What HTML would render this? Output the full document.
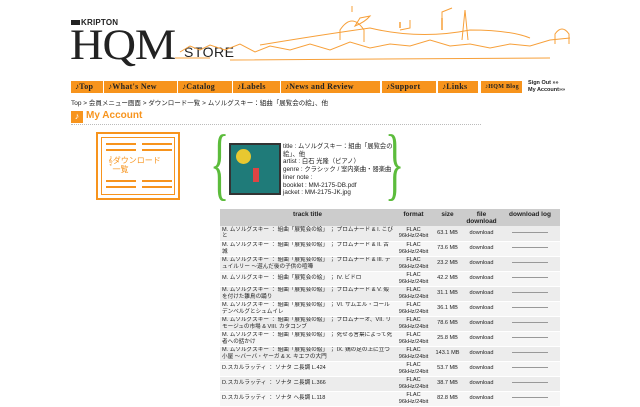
<!DOCTYPE html>
<html><head><meta charset="utf-8"><style>
*{margin:0;padding:0;box-sizing:border-box}
body{width:640px;height:402px;overflow:hidden;background:#fff;font-family:"Liberation Sans","Noto Sans CJK JP",sans-serif;color:#222;position:relative}
.a{position:absolute}
.nav{position:absolute;top:81px;height:12px;background:#f7941d;color:#222;font-size:8px;font-weight:bold;line-height:12px;padding-left:4px;font-family:"Liberation Serif",serif;letter-spacing:.3px}
table{border-collapse:collapse;font-size:5.6px;line-height:6.5px;position:absolute;left:220px;top:209px;width:340px;table-layout:fixed}
td,th{padding:0 2px;vertical-align:middle;overflow:hidden}
th{background:#ccc;height:17px;font-size:6.5px;line-height:7px;vertical-align:top;padding-top:2px}
tr.r td{height:15px;border-bottom:1px solid #fff}
tr.r:nth-child(even) td{background:#ececec}
tr.r:nth-child(odd) td{background:#f6f6f6}
.c{text-align:center}
.ln{display:inline-block;width:36px;border-top:1px solid #999;vertical-align:middle}
.hl{position:absolute;height:2px;background:#f7941d}
</style></head><body>
<div class="a" style="left:71px;top:18px;font-size:8px;font-weight:bold;letter-spacing:.2px"><span style="display:inline-block;width:9px;height:5px;background:#222;margin-right:1px"></span>KRIPTON</div>
<div class="a" style="left:70px;top:24px;font-family:'Liberation Serif',serif;font-size:43px;line-height:43px;letter-spacing:-1px;transform:scaleX(1.08);transform-origin:left">HQM</div>
<div class="a" style="left:184px;top:44px;font-size:14px;letter-spacing:.5px">STORE</div>
<svg class="a" style="left:170px;top:0" width="420" height="70" fill="none" stroke="#f7a03a" stroke-width="1">
<path d="M10 52 L20 46 L30 50 L40 45 L55 50 L70 44 L85 52 L100 46 L120 50 L140 44 L160 50 L180 42 L200 48 L220 44 L240 46 L260 40 L280 46 L300 44 L320 48 L340 44 L360 46 L380 40 L400 38"/>
<path d="M5 58 L40 58 M60 60 L380 58"/>
<path d="M170 40 L170 30 Q182 12 194 30 L194 42 M182 12 L182 6"/>
<path d="M90 45 Q150 35 200 28 Q250 40 300 30 Q340 30 360 38"/>
<path d="M292 40 L295 10 L298 40"/>
<path d="M385 44 L385 34 Q392 24 399 34 L399 44"/>
<path d="M185 26 Q195 22 200 16 L190 18 Z"/>
<path d="M230 30 L240 28 L240 20 M272 30 L272 12 L282 8"/>
<g stroke-width="1.5"><path d="M230 28 L230 22 M272 30 L272 18"/></g>
</svg>
<div class="nav" style="left:71px;width:32px">♪Top</div>
<div class="nav" style="left:104px;width:73px">♪What's New</div>
<div class="nav" style="left:178px;width:54px">♪Catalog</div>
<div class="nav" style="left:233px;width:47px">♪Labels</div>
<div class="nav" style="left:281px;width:99px">♪News and Review</div>
<div class="nav" style="left:382px;width:54px">♪Support</div>
<div class="nav" style="left:438px;width:40px">♪Links</div>
<div class="nav" style="left:481px;width:41px;font-size:6px">♪HQM Blog</div>
<div class="a" style="left:528px;top:80px;font-size:5.5px;font-weight:bold;line-height:7px">Sign Out »»<br>My Account»»</div>
<div class="a" style="left:71px;top:97px;font-size:6.5px">Top &gt; 会員メニュー画面 &gt; ダウンロード一覧 &gt; ムソルグスキー：組曲「展覧会の絵」、他</div>
<div class="a" style="left:71px;top:111px;width:12px;height:12px;background:#f7941d;color:#fff;font-size:9px;text-align:center">♪</div>
<div class="a" style="left:86px;top:110px;color:#f7941d;font-size:10px;font-weight:bold">My Account</div>
<div class="a" style="left:71px;top:124px;width:410px;border-top:1px dotted #bbb"></div>
<div class="a" style="left:96px;top:132px;width:84px;height:68px;border:2px solid #f7941d"><div style="margin:3px;border:1px solid #f7941d;height:58px;position:relative">
<div class="hl" style="left:4px;top:5px;width:30px"></div><div class="hl" style="left:40px;top:5px;width:30px"></div>
<div class="hl" style="left:4px;top:11px;width:30px"></div><div class="hl" style="left:40px;top:11px;width:30px"></div>
<div class="hl" style="left:4px;top:42px;width:30px"></div><div class="hl" style="left:40px;top:42px;width:30px"></div>
<div class="hl" style="left:4px;top:48px;width:30px"></div><div class="hl" style="left:40px;top:48px;width:30px"></div>
<div style="position:absolute;left:6px;top:18px;color:#f7941d;font-size:8px;line-height:9px">𝄞ダウンロード<br>&nbsp;&nbsp;一覧</div></div></div>
<div class="a" style="left:210px;top:124px;font-size:80px;color:#5cbc3c;font-family:'Liberation Serif',serif;line-height:80px;transform:scaleX(.5);transform-origin:left">{</div>
<div class="a" style="left:385px;top:124px;font-size:80px;color:#5cbc3c;font-family:'Liberation Serif',serif;line-height:80px;transform:scaleX(.5);transform-origin:left">}</div>
<div class="a" style="left:229px;top:143px;width:52px;height:52px;background:#1f7b79;border:2px solid #333"><div style="margin:4px 0 0 5px;width:15px;height:15px;border-radius:50%;background:#e8c830"></div><div style="margin:4px 0 0 22px;width:6px;height:14px;background:#d44"></div></div>
<div class="a" style="left:283px;top:143px;font-size:6.3px;line-height:7.7px;width:110px">title : ムソルグスキー：組曲「展覧会の絵」、他<br>artist : 白石 光隆（ピアノ）<br>genre : クラシック / 室内楽曲・器楽曲<br>liner note :<br>booklet : MM-2175-DB.pdf<br>jacket : MM-2175-JK.jpg</div>
<table>
<colgroup><col style="width:175px"><col style="width:37px"><col style="width:31px"><col style="width:37px"><col></colgroup>
<tr><th>track title</th><th>format</th><th>size</th><th>file<br>download</th><th>download log</th></tr>
<tr class="r"><td>M. ムソルグスキー ： 組曲「展覧会の絵」 ； プロムナード &amp; I. こびと</td><td class="c">FLAC<br>96kHz/24bit</td><td class="c">63.1 MB</td><td class="c">download</td><td class="c"><span class="ln"></span></td></tr>
<tr class="r"><td>M. ムソルグスキー ： 組曲「展覧会の絵」 ； プロムナード &amp; II. 古城</td><td class="c">FLAC<br>96kHz/24bit</td><td class="c">73.6 MB</td><td class="c">download</td><td class="c"><span class="ln"></span></td></tr>
<tr class="r"><td>M. ムソルグスキー ： 組曲「展覧会の絵」 ； プロムナード &amp; III. テュイルリー ～遊んだ後の子供の喧嘩</td><td class="c">FLAC<br>96kHz/24bit</td><td class="c">23.2 MB</td><td class="c">download</td><td class="c"><span class="ln"></span></td></tr>
<tr class="r"><td>M. ムソルグスキー ： 組曲「展覧会の絵」 ； IV. ビドロ</td><td class="c">FLAC<br>96kHz/24bit</td><td class="c">42.2 MB</td><td class="c">download</td><td class="c"><span class="ln"></span></td></tr>
<tr class="r"><td>M. ムソルグスキー ： 組曲「展覧会の絵」 ； プロムナード &amp; V. 殻を付けた雛鳥の踊り</td><td class="c">FLAC<br>96kHz/24bit</td><td class="c">31.1 MB</td><td class="c">download</td><td class="c"><span class="ln"></span></td></tr>
<tr class="r"><td>M. ムソルグスキー ： 組曲「展覧会の絵」 ； VI. サムエル・ゴールデンベルグとシュムイレ</td><td class="c">FLAC<br>96kHz/24bit</td><td class="c">36.1 MB</td><td class="c">download</td><td class="c"><span class="ln"></span></td></tr>
<tr class="r"><td>M. ムソルグスキー ： 組曲「展覧会の絵」 ； プロムナーオ、VII. リモージュの市場 &amp; VIII. カタコンブ</td><td class="c">FLAC<br>96kHz/24bit</td><td class="c">78.6 MB</td><td class="c">download</td><td class="c"><span class="ln"></span></td></tr>
<tr class="r"><td>M. ムソルグスキー ： 組曲「展覧会の絵」 ； 死せる言葉によって死者への話かけ</td><td class="c">FLAC<br>96kHz/24bit</td><td class="c">25.8 MB</td><td class="c">download</td><td class="c"><span class="ln"></span></td></tr>
<tr class="r"><td>M. ムソルグスキー ： 組曲「展覧会の絵」 ； IX. 鶏の足の上に立つ小屋 ～バーバ・ヤーガ &amp; X. キエフの大門</td><td class="c">FLAC<br>96kHz/24bit</td><td class="c">143.1 MB</td><td class="c">download</td><td class="c"><span class="ln"></span></td></tr>
<tr class="r"><td>D.スカルラッティ ： ソナタ ニ長調 L.424</td><td class="c">FLAC<br>96kHz/24bit</td><td class="c">53.7 MB</td><td class="c">download</td><td class="c"><span class="ln"></span></td></tr>
<tr class="r"><td>D.スカルラッティ ： ソナタ ニ長調 L.366</td><td class="c">FLAC<br>96kHz/24bit</td><td class="c">38.7 MB</td><td class="c">download</td><td class="c"><span class="ln"></span></td></tr>
<tr class="r"><td>D.スカルラッティ ： ソナタ ヘ長調 L.118</td><td class="c">FLAC<br>96kHz/24bit</td><td class="c">82.8 MB</td><td class="c">download</td><td class="c"><span class="ln"></span></td></tr>
</table>
</body></html>
